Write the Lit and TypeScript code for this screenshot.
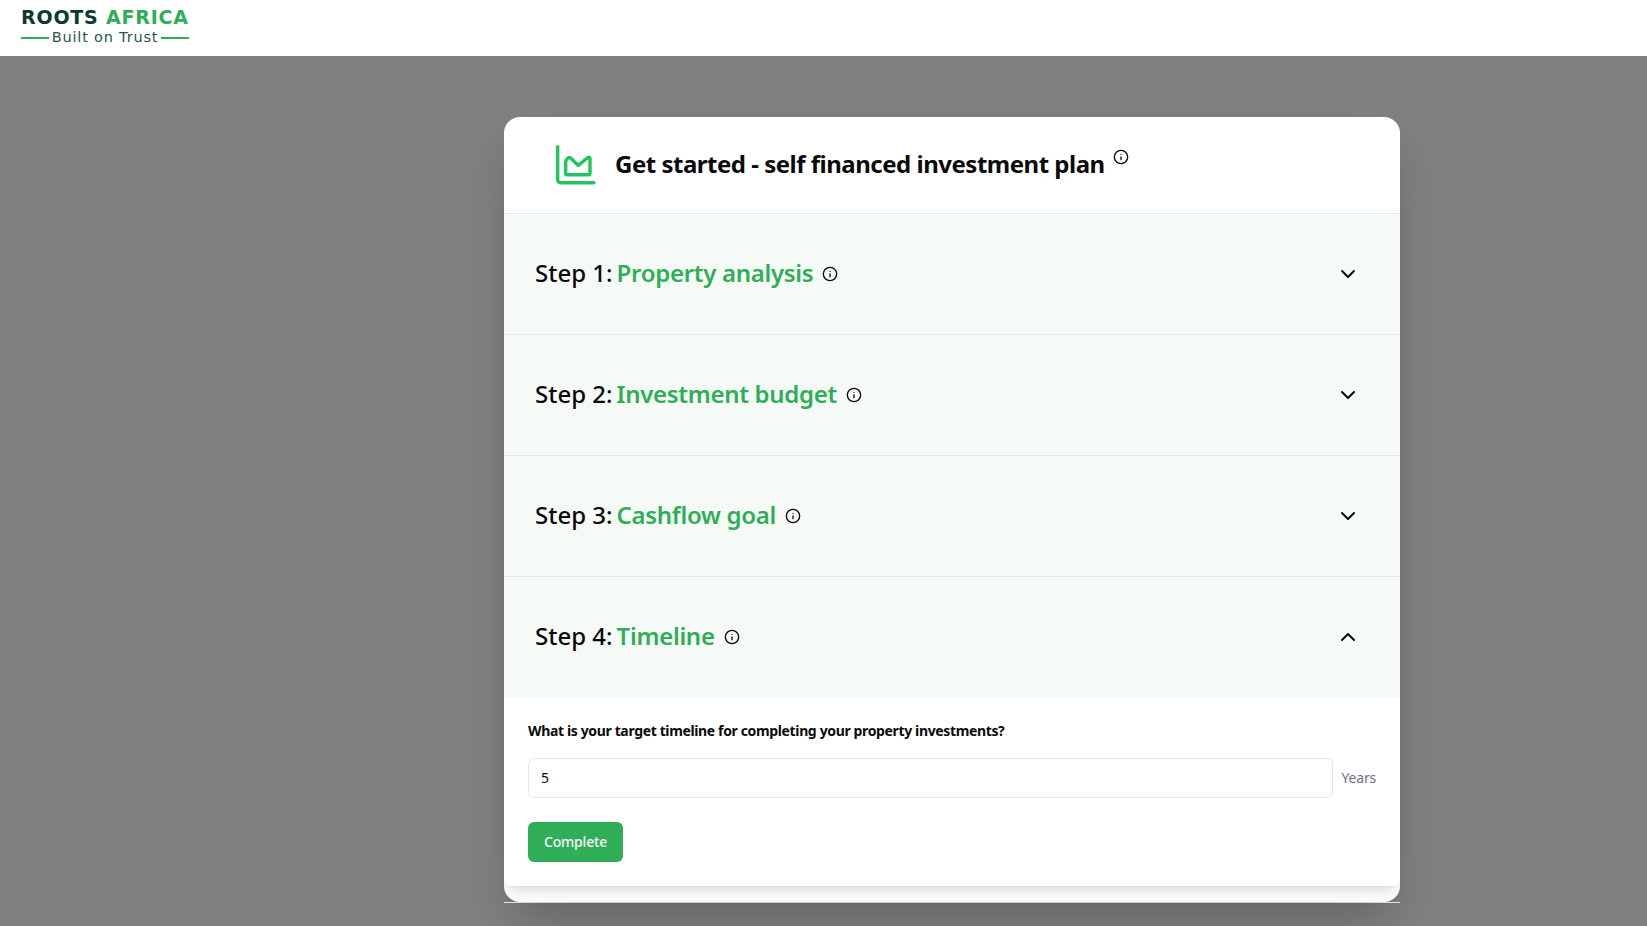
import { css, html, LitElement, TemplateResult } from "lit";
import { customElement, state } from "lit/decorators.js";

const infoIcon = html`<svg class="info" viewBox="0 0 24 24" fill="none" stroke="currentColor" stroke-width="2" stroke-linecap="round" stroke-linejoin="round">
    <circle cx="12" cy="12" r="10"></circle>
    <path d="M12 16v-4"></path>
    <path d="M12 8h.01"></path>
</svg>`;

const chevronDown = html`<svg class="chevron" viewBox="0 0 24 24" fill="none" stroke="currentColor" stroke-width="2" stroke-linecap="round" stroke-linejoin="round"><path d="m6 9 6 6 6-6"></path></svg>`;
const chevronUp = html`<svg class="chevron" viewBox="0 0 24 24" fill="none" stroke="currentColor" stroke-width="2" stroke-linecap="round" stroke-linejoin="round"><path d="m18 15-6-6-6 6"></path></svg>`;

const chartIcon = html`<svg class="chart" viewBox="0 0 40 40" fill="none" stroke="#22c55e" stroke-width="3.4" stroke-linecap="round" stroke-linejoin="round">
    <path d="M1.7 1.7V35a2.7 2.7 0 0 0 2.7 2.7H38"></path>
    <path d="M9.7 28.3V16.5Q9.7 15.5 10.7 14.5L12 13Q13.2 11.7 14.6 13L22.3 20.5L31.5 12.7Q34 11 34 14V28.3Q34 29.8 32.5 29.8H11.2Q9.7 29.8 9.7 28.3Z"></path>
</svg>`;

@customElement("app-root")
export class AppRoot extends LitElement {
    @state() private openStep = 4;

    private steps = [
        { n: 1, title: "Property analysis" },
        { n: 2, title: "Investment budget" },
        { n: 3, title: "Cashflow goal" },
        { n: 4, title: "Timeline" },
    ];

    private renderStep(step: { n: number; title: string }): TemplateResult {
        const open = step.n === this.openStep;
        return html`
            <div class="step">
                <div class="step-head">
                    <div class="step-title">
                        <span class="label">Step ${step.n}:</span>
                        <span class="label name">${step.title}</span>
                        ${infoIcon}
                    </div>
                    ${open ? chevronUp : chevronDown}
                </div>
                ${open
                    ? html`<div class="step-body">
                          <div class="question">What is your target timeline for completing your property investments?</div>
                          <div class="field">
                              <input class="input" type="text" .value=${"5"} />
                              <span class="unit">Years</span>
                          </div>
                          <button class="complete">Complete</button>
                      </div>`
                    : ""}
            </div>
        `;
    }

    protected render(): TemplateResult {
        return html`
            <header class="nav">
                <div class="logo">
                    <div class="logo-name">ROOTS <span class="green">AFRICA</span></div>
                    <div class="logo-tag"><i></i><span>Built on Trust</span><i></i></div>
                </div>
            </header>
            <main class="backdrop">
                <div class="card-wrap">
                    <div class="card">
                        <div class="card-head">
                            ${chartIcon}
                            <h1>Get started - self financed investment plan</h1>
                            <span class="head-info">${infoIcon}</span>
                        </div>
                        <div class="steps">${this.steps.map((s) => this.renderStep(s))}</div>
                    </div>
                </div>
            </main>
        `;
    }

    static styles = css`
        :host {
            display: block;
            height: 926px;
            overflow: hidden;
            font-family: "Noto Sans", "Open Sans", sans-serif;
            color: #0a0a0a;
        }
        * {
            box-sizing: border-box;
        }
        .green {
            color: #2fae57;
        }
        .nav {
            height: 56px;
            background: #fff;
            padding: 7px 0 0 21px;
        }
        .logo {
            width: 168px;
        }
        .logo-name {
            font-family: "DejaVu Sans", sans-serif;
            font-size: 19px;
            line-height: 20px;
            font-weight: 700;
            letter-spacing: 0.8px;
            color: #0c3a33;
            white-space: nowrap;
        }
        .logo-tag {
            display: flex;
            align-items: center;
            gap: 3px;
            margin-top: 2px;
            font-family: "DejaVu Sans", sans-serif;
            font-size: 14.5px;
            line-height: 17px;
            letter-spacing: 0.8px;
            color: #2c544c;
            white-space: nowrap;
        }
        .logo-tag i {
            flex: 1;
            height: 2px;
            background: #2fae57;
        }
        .backdrop {
            height: 870px;
            background: #808080;
            padding: 61px 247px 0 504px;
        }
        .card-wrap {
            height: 786px;
            border-bottom: 1px solid #f3f4f6;
        }
        .card {
            height: 785px;
            background: #fff;
            border-radius: 16px;
            overflow: hidden;
            box-shadow: 0 25px 50px -12px rgba(0, 0, 0, 0.25);
        }
        .card-head {
            height: 97px;
            display: flex;
            align-items: center;
            padding-left: 52px;
            border-bottom: 1px solid #e5e7eb;
        }
        .chart {
            width: 40px;
            height: 40px;
            flex: none;
        }
        h1 {
            margin: 0 0 2px 19px;
            font-size: 24px;
            line-height: 32px;
            font-weight: 700;
            letter-spacing: -0.49px;
            white-space: nowrap;
        }
        .head-info {
            align-self: flex-start;
            margin: 32px 0 0 8px;
            display: flex;
        }
        .steps {
            border-radius: 0 0 8px 8px;
            box-shadow: 0 10px 15px -3px rgba(0, 0, 0, 0.1), 0 4px 6px -4px rgba(0, 0, 0, 0.1);
        }
        .step-head {
            height: 121px;
            padding: 0 40px 0 31px;
            display: flex;
            align-items: center;
            justify-content: space-between;
            background: #f6faf7;
            border-bottom: 1px solid #e5e7eb;
        }
        .step:last-child .step-head {
            border-bottom-color: transparent;
        }
        .step-title {
            display: flex;
            align-items: center;
            gap: 4px;
            font-size: 24px;
            line-height: 32px;
            font-weight: 500;
        }
        .label {
            padding-bottom: 2px;
        }
        .name {
            color: #2fae57;
            font-weight: 600;
            letter-spacing: -0.3px;
        }
        .info {
            width: 16px;
            height: 16px;
            flex: none;
            margin-left: 5px;
            color: #0a0a0a;
        }
        .head-info .info {
            margin: 0;
        }
        .chevron {
            width: 24px;
            height: 24px;
            flex: none;
        }
        .step-body {
            padding: 23px 24px 24px;
            background: #fff;
            border-radius: 0 0 8px 8px;
        }
        .question {
            font-size: 14px;
            line-height: 20px;
            font-weight: 700;
            letter-spacing: -0.36px;
        }
        .field {
            display: flex;
            align-items: center;
            gap: 8px;
            margin-top: 17px;
        }
        .input {
            flex: 1;
            min-width: 0;
            height: 40px;
            padding: 0 12px 2px;
            border: 1px solid #e5e7eb;
            border-radius: 6px;
            font: inherit;
            font-size: 14px;
            color: #0a0a0a;
            background: #fff;
        }
        .unit {
            font-size: 14px;
            color: #6b7280;
            letter-spacing: -0.2px;
            padding-bottom: 2px;
            margin-left: 1px;
        }
        .complete {
            display: block;
            margin-top: 24px;
            width: 95px;
            height: 40px;
            padding: 0 0 2px;
            border: 0;
            border-radius: 6px;
            background: #2fae57;
            color: #f8fafc;
            font: inherit;
            font-size: 14px;
            font-weight: 500;
            letter-spacing: -0.2px;
        }
    `;
}
